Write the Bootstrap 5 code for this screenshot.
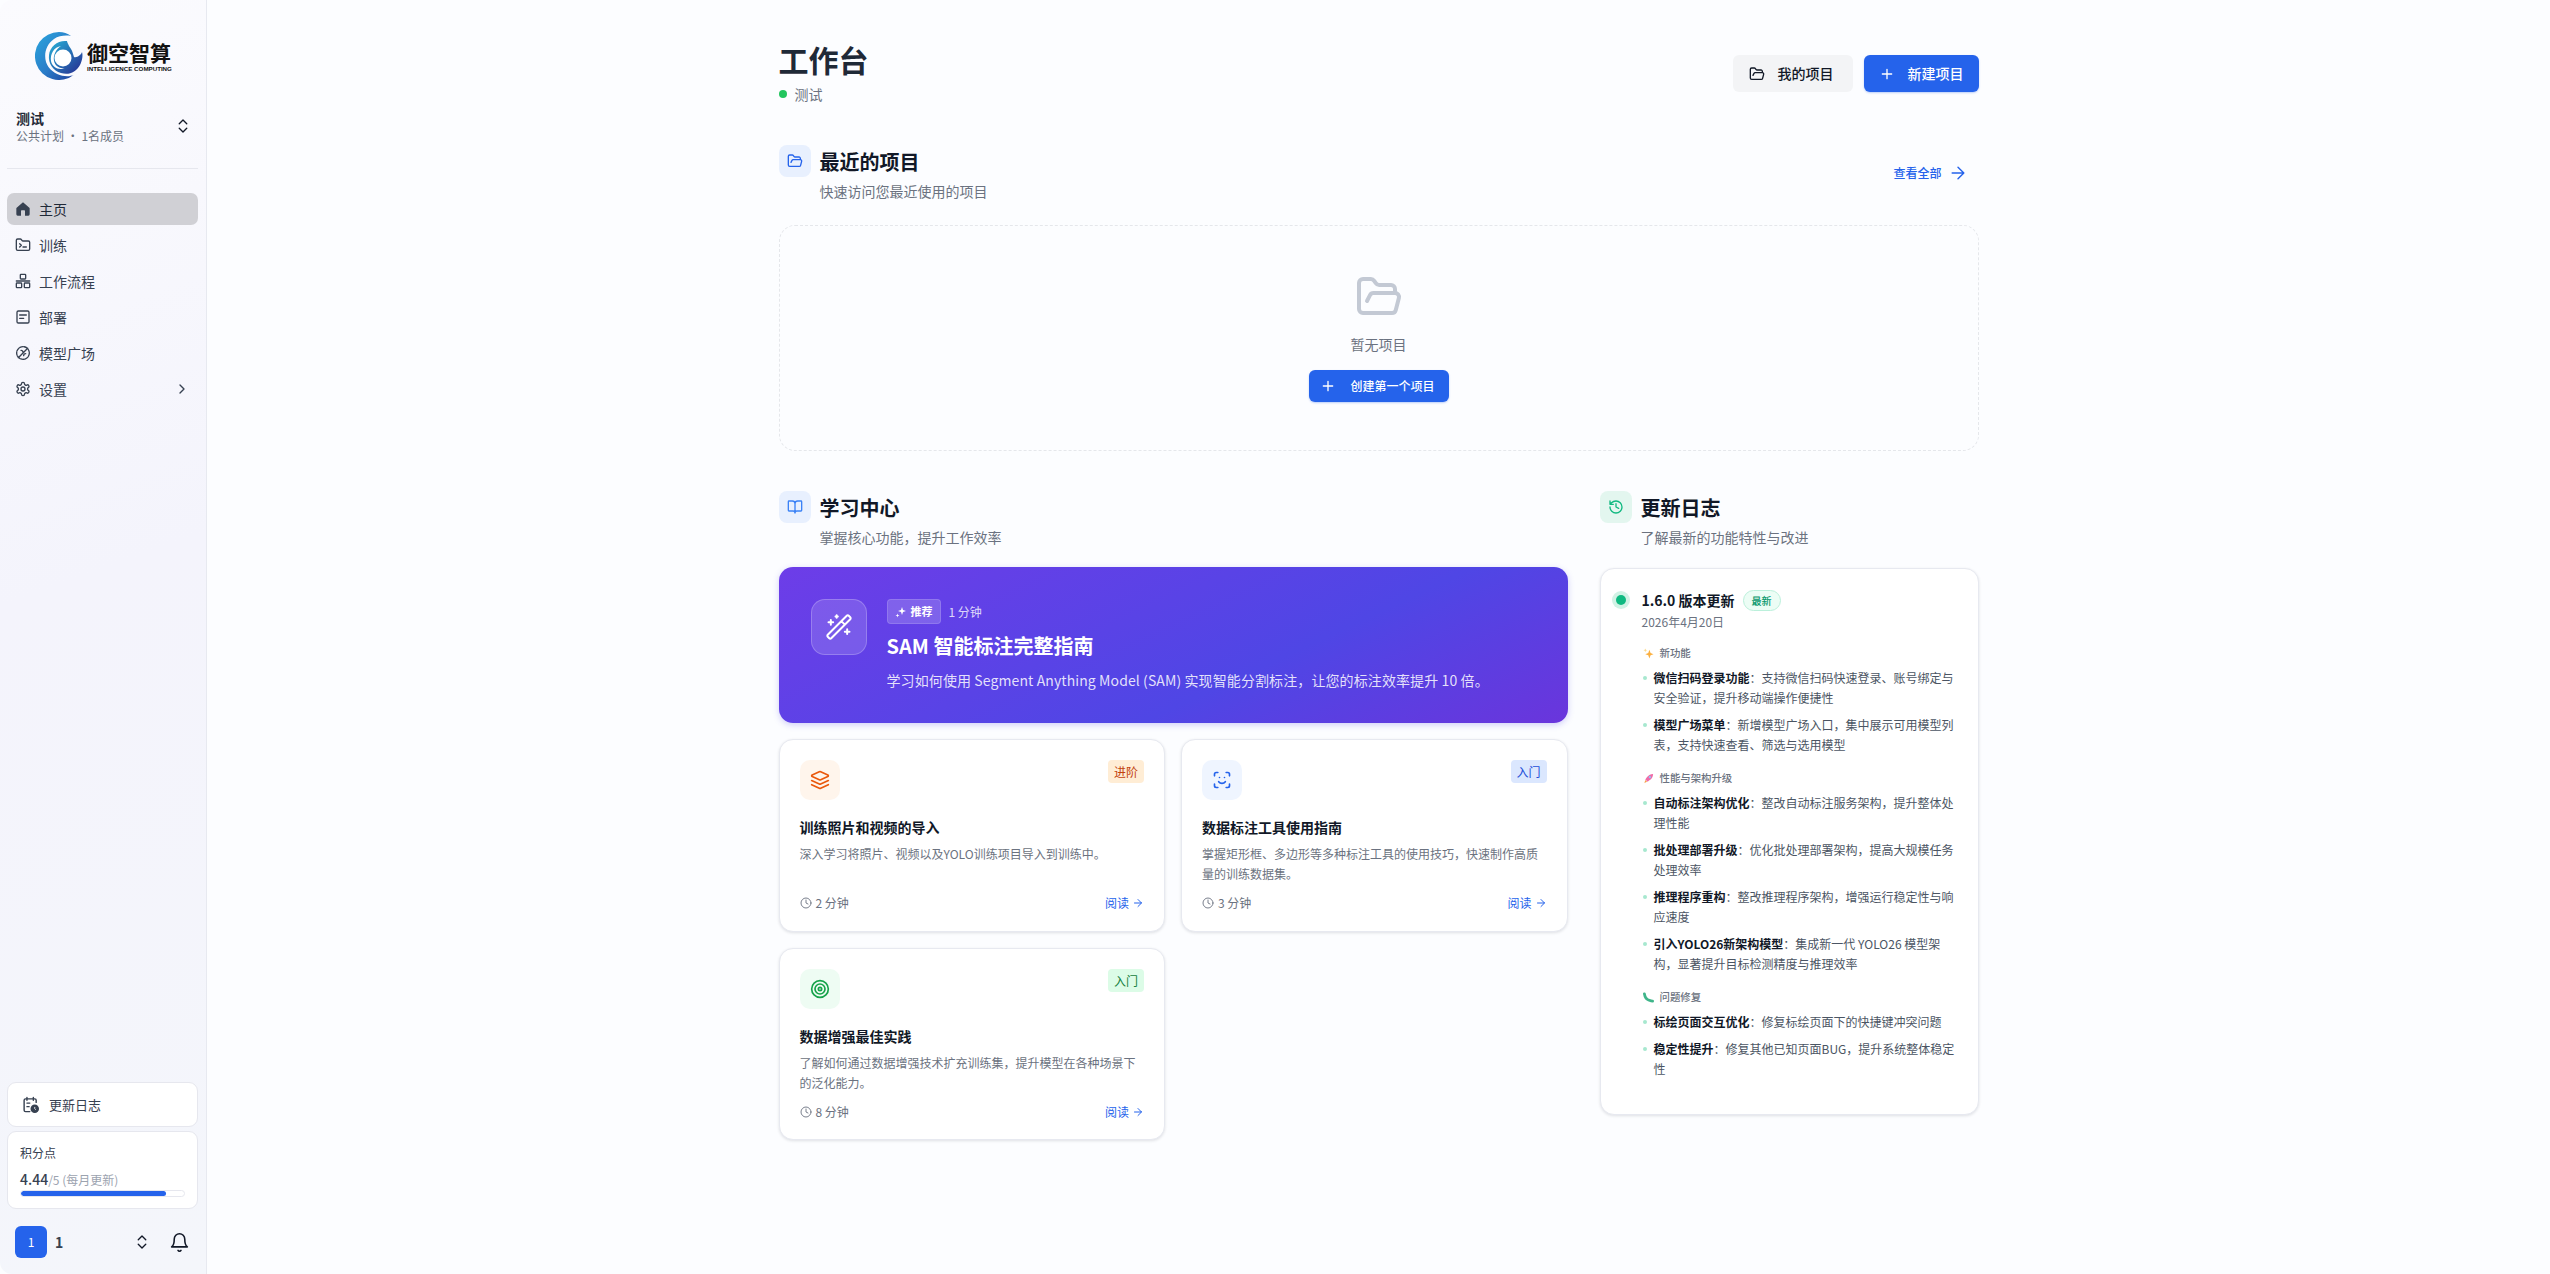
<!DOCTYPE html>
<html lang="zh-CN">
<head>
  <meta charset="UTF-8">
  <meta name="viewport" content="width=device-width, initial-scale=1.0">
  <title>工作台</title>
  <link href="https://cdn.jsdelivr.net/npm/bootstrap@5.3.3/dist/css/bootstrap.min.css" rel="stylesheet">
  <style>
    body { font-family: "Noto Sans CJK SC", "Noto Sans", sans-serif; background: #fcfdff; color: #111827; height: 1274px; overflow: hidden; }
    .ico { fill: none; stroke: currentColor; stroke-width: 2; stroke-linecap: round; stroke-linejoin: round; flex-shrink: 0; display: block; }

    /* sidebar */
    .side { width: 207px; height: 1274px; flex-shrink: 0; background: linear-gradient(160deg, #fbfbfe 0%, #f4f4fc 45%, #f4f6fb 100%); border-right: 1px solid #e7e9f0; border-radius: 12px 0 0 12px; padding: 0 8px 0 7px; }
    .logo-row { height: 48px; margin: 32px 0 0 28px; }
    .logo-name { font-size: 21px; font-weight: 700; line-height: 25px; color: #111; }
    .logo-sub { font-size: 6.200px; font-weight: 700; line-height: 8px; color: #111; white-space: nowrap; font-family: "Liberation Sans", sans-serif; }
    .ws-row { margin: 26px 0 0 9px; padding-right: 6px; height: 40px; }
    .ws-name { font-size: 14px; font-weight: 700; line-height: 20px; color: #1f2937; }
    .ws-sub { font-size: 12px; line-height: 16px; color: #6b7280; }
    .side-line { height: 1px; background: #e6e7ee; margin: 22px 0 24px; }
    .side-link { height: 32px; margin-bottom: 4px; padding: 0 8px; border-radius: 7px; font-size: 14px; color: #374151; gap: 8px; }
    .side-link.on { background: #d0d0d5; color: #1f2937; }
    .side-link svg { color: #374151; }
    .side-box { background: #fff; border: 1px solid #e6e7ee; border-radius: 9px; }
    .log-box { height: 45px; padding-left: 14px; gap: 10px; font-size: 13px; color: #374151; margin-bottom: 4px; }
    .pts-box { height: 78px; padding: 12px 12px 0; }
    .pts-title { font-size: 12px; line-height: 18px; color: #374151; }
    .pts-val { font-size: 14px; line-height: 20px; color: #374151; font-weight: 500; margin-top: 7px; }
    .pts-val span { font-size: 12px; color: #9ca3af; font-weight: 400; }
    .pts-bar { height: 7px; background: #fff; border: 1px solid #e6e7ee; border-radius: 4px; }
    .pts-bar .progress-bar { background: #2563eb; border-radius: 4px; }
    .user-row { height: 32px; margin: 17px 0 16px 8px; padding-right: 8px; }
    .user-av { width: 32px; height: 32px; background: #2563eb; color: #fff; border-radius: 6px; font-size: 12px; }
    .user-nm { font-size: 14px; font-weight: 700; color: #374151; margin-left: 8px; }
    .ud-user { margin-right: 18px; stroke-width: 1.800; }
    .ud-ws { stroke-width: 1.800; }

    /* main */
    .page { width: 1200px; padding-top: 41px; }
    .pg-title { font-size: 30px; font-weight: 700; line-height: 36px; color: #1f2937; margin: 0; }
    .pg-sub { font-size: 14px; line-height: 20px; color: #6b7280; margin-top: 7px; gap: 8px; }
    .live-dot { width: 8px; height: 8px; background: #22c55e; border-radius: 50%; }
    .top-btns { gap: 11px; margin-top: 14px; }
    .top-btn { height: 37px; font-size: 14px; font-weight: 500; border-radius: 6px; gap: 13px; border: 0; }
    .btn-soft { background: #f3f4f6; color: #111827; padding: 0 19px 0 16px; }
    .btn-soft:hover { background: #f3f4f6; color: #111827; }
    .btn-main { background: #2563eb; color: #fff; padding: 0 15px; box-shadow: 0 1px 2px rgba(37, 99, 235, .3); }
    .btn-main:hover { background: #2563eb; color: #fff; }

    .sec-head { margin-top: 41px; }
    .sec-ico { width: 32px; height: 32px; border-radius: 8px; }
    .ic-blue { background: #e8f0fe; color: #2563eb; }
    .ic-sky { background: #e8f0fe; color: #3b82f6; }
    .ic-green { background: #e3f6ef; color: #10b981; }
    .sec-title { font-size: 20px; font-weight: 700; line-height: 34px; color: #111827; margin: 0 0 0 9px; }
    .sec-sub { font-size: 14px; line-height: 20px; color: #6b7280; margin: 2px 0 0 41px; }
    .see-all { font-size: 12px; color: #2563eb; text-decoration: none; gap: 6px; padding-right: 11px; font-weight: 500; }
    .see-all svg { stroke-width: 1.700; }

    .empty-box { height: 226px; border: 1px dashed #e5e7eb; border-radius: 16px; margin-top: 24px; padding-top: 47px; }
    .empty-txt { font-size: 14px; line-height: 20px; color: #6b7280; margin: 13px 0 16px; }
    .first-btn { height: 32px; width: 140px; padding: 0 0 0 11px; font-size: 12px; font-weight: 500; border-radius: 6px; gap: 15px; border: 0; }

    .cols { margin-top: 40px; gap: 32px; }
    .col-l { width: 789px; }
    .col-r { width: 379px; }

    .hero { height: 156px; margin-top: 20px; border-radius: 14px; padding: 32px; color: #fff; background: linear-gradient(155deg, #6d3de8 0%, #4f46e5 62%, #6a35dc 100%); box-shadow: 0 2px 6px rgba(79, 70, 229, .25); gap: 20px; }
    .hero-ico { width: 56px; height: 56px; border-radius: 14px; background: rgba(255, 255, 255, .14); border: 1px solid rgba(255, 255, 255, .22); }
    .hero-tag { height: 25px; width: 54px; background: rgba(255, 255, 255, .18); border: 1px solid rgba(255, 255, 255, .14); border-radius: 4px; font-size: 11px; font-weight: 700; gap: 4px; }
    .hero-min { font-size: 12px; color: rgba(255, 255, 255, .8); margin-left: 8px; }
    .hero-title { font-size: 20px; font-weight: 700; line-height: 30px; margin: 7px 0 9px; }
    .hero-desc { font-size: 14px; line-height: 20px; color: rgba(255, 255, 255, .85); margin: 0; letter-spacing: .1px; }

    .guide { height: 192.500px; border: 1px solid #e7e9f0; border-radius: 14px; padding: 20px; box-shadow: 0 1px 3px rgba(17, 24, 39, .12); background: #fff; }
    .guide-ico { width: 40px; height: 40px; border-radius: 10px; }
    .ic-orange { background: #fff5ec; color: #ea580c; }
    .ic-lblue { background: #eff5ff; color: #2563eb; }
    .ic-lgreen { background: #eefcf3; color: #16a34a; }
    .lv { width: 36px; height: 23px; border-radius: 4px; font-size: 12px; font-weight: 400; padding: 0; line-height: 23px; }
    .lv-o { background: #ffedd5; color: #c2410c; }
    .lv-b { background: #dbe7fe; color: #1d4ed8; }
    .lv-g { background: #dcfce7; color: #15803d; }
    .guide-title { font-size: 14px; font-weight: 700; line-height: 22px; margin: 16px 0 6px; color: #111827; }
    .guide-desc { font-size: 12px; line-height: 20px; color: #6b7280; height: 40px; margin: 0 0 10px; }
    .guide-foot { font-size: 12px; line-height: 18px; color: #6b7280; }
    .guide-read { color: #2563eb; text-decoration: none; gap: 3px; }

    .log-card { margin-top: 21px; height: 547px; border: 1px solid #e7e9f0; border-radius: 14px; padding: 20px 19px 0 11px; box-shadow: 0 1px 3px rgba(17, 24, 39, .12); background: #fff; }
    .ver-dot { width: 18px; height: 18px; border-radius: 50%; background: #d1f2e5; margin-right: 12px; }
    .ver-dot i { width: 10px; height: 10px; border-radius: 50%; background: #10b981; display: block; }
    .ver-name { font-size: 14px; font-weight: 700; line-height: 22px; color: #111827; }
    .ver-tag { font-size: 10px; font-weight: 500; color: #059669; background: #ecfdf5; border: 1px solid #bbf0db; padding: 0; width: 38px; height: 21px; line-height: 19px; margin-left: 8px; }
    .ver-date { font-size: 12px; line-height: 18px; color: #6b7280; margin: 2px 0 0 30px; }
    .log-body { margin-left: 30px; }
    .grp { font-size: 10.400px; font-weight: 500; line-height: 16px; color: #6b7280; gap: 6px; margin: 14px 0 7px 1px; }
    .log-list + .grp { margin-top: 15px; }
    .log-list { list-style: none; padding: 0 0 0 12px; margin: 0; }
    .log-list li { font-size: 12px; line-height: 20px; color: #4b5563; margin-bottom: 7px; position: relative; }
    .log-list li::before { content: ""; position: absolute; left: -11px; top: 8px; width: 4px; height: 4px; border-radius: 50%; background: #a7e8cf; }
    .log-list b { font-weight: 700; color: #111827; }
  </style>
</head>
<body>

  <!-- icons -->
  <svg width="0" height="0" class="position-absolute">
    <symbol id="i-folder" viewBox="0 0 24 24"><path d="m6 14 1.5-2.9A2 2 0 0 1 9.24 10H20a2 2 0 0 1 1.94 2.5l-1.54 6a2 2 0 0 1-1.95 1.5H4a2 2 0 0 1-2-2V5a2 2 0 0 1 2-2h3.9a2 2 0 0 1 1.69.9l.81 1.2a2 2 0 0 0 1.67.9H18a2 2 0 0 1 2 2v2"/></symbol>
    <symbol id="i-plus" viewBox="0 0 24 24"><path d="M5 12h14M12 5v14"/></symbol>
    <symbol id="i-arrow" viewBox="0 0 24 24"><path d="M5 12h14M12 5l7 7-7 7"/></symbol>
    <symbol id="i-updown" viewBox="0 0 24 24"><path d="m7 15 5 5 5-5M7 9l5-5 5 5"/></symbol>
    <symbol id="i-right" viewBox="0 0 24 24"><path d="m9 18 6-6-6-6"/></symbol>
    <symbol id="i-clock" viewBox="0 0 24 24"><circle cx="12" cy="12" r="10"/><path d="M12 6v6l4 2"/></symbol>
    <symbol id="i-gear" viewBox="0 0 24 24"><path d="M12.22 2h-.44a2 2 0 0 0-2 2v.18a2 2 0 0 1-1 1.73l-.43.25a2 2 0 0 1-2 0l-.15-.08a2 2 0 0 0-2.73.73l-.22.38a2 2 0 0 0 .73 2.73l.15.1a2 2 0 0 1 1 1.72v.51a2 2 0 0 1-1 1.74l-.15.09a2 2 0 0 0-.73 2.73l.22.38a2 2 0 0 0 2.73.73l.15-.08a2 2 0 0 1 2 0l.43.25a2 2 0 0 1 1 1.73V20a2 2 0 0 0 2 2h.44a2 2 0 0 0 2-2v-.18a2 2 0 0 1 1-1.73l.43-.25a2 2 0 0 1 2 0l.15.08a2 2 0 0 0 2.73-.73l.22-.39a2 2 0 0 0-.73-2.73l-.15-.08a2 2 0 0 1-1-1.74v-.5a2 2 0 0 1 1-1.74l.15-.09a2 2 0 0 0 .73-2.73l-.22-.38a2 2 0 0 0-2.73-.73l-.15.08a2 2 0 0 1-2 0l-.43-.25a2 2 0 0 1-1-1.73V4a2 2 0 0 0-2-2z"/><circle cx="12" cy="12" r="3"/></symbol>
  </svg>

  <div class="d-flex">
    <aside class="side d-flex flex-column">
      <div class="logo-row d-flex align-items-center">
        <svg width="48" height="48" viewBox="0 0 48 48" class="flex-shrink-0">
          <defs>
            <linearGradient id="lg1" x1="0" y1="0" x2="1" y2="1"><stop offset="0" stop-color="#2aa7de"/><stop offset=".55" stop-color="#2a7cc8"/><stop offset="1" stop-color="#1e3f9c"/></linearGradient>
            <linearGradient id="lg2" x1="0" y1="0" x2="1" y2="1"><stop offset="0" stop-color="#27b2d8"/><stop offset="1" stop-color="#272a8f"/></linearGradient>
          </defs>
          <path d="M24 0a24 24 0 1 0 15 42.7C33 46 20 44 13.500 35 8 27 9 14 19 7c5-3.500 12-4 17-3C32.500 1.300 28.500 0 24 0z" fill="url(#lg1)"/>
          <path d="M32 9c-9-1-17 5-18 14-1 8 4 16 12 18 8 2.500 15-1 19-8 2.500-5 3-10 2-13-1 3-5 6-8 5-1-3-1.500-6-3-8-2-3-4-7-4-8z" fill="url(#lg2)"/>
          <circle cx="28" cy="26" r="8.500" fill="#fff"/>
          <path d="M19 29c1 5 6 8 11 7-6 3-13-1-14-7-1-7 3-14 10-15-5 3-8 9-7 15z" fill="#fff"/>
        </svg>
        <div class="ms-1">
          <div class="logo-name">御空智算</div>
          <div class="logo-sub">INTELLIGENCE COMPUTING</div>
        </div>
      </div>

      <div class="ws-row d-flex align-items-center justify-content-between">
        <div>
          <div class="ws-name">测试</div>
          <div class="ws-sub">公共计划 · 1名成员</div>
        </div>
        <svg class="ico ud-ws" width="18" height="18"><use href="#i-updown"/></svg>
      </div>
      <div class="side-line"></div>

      <nav class="nav flex-column">
        <a class="nav-link side-link on d-flex align-items-center" href="#">
          <svg width="16" height="16" viewBox="0 0 24 24" fill="currentColor"><path d="M12 2 2.500 10a1.500 1.500 0 0 0-.5 1.200V20a2 2 0 0 0 2 2h5v-7a1 1 0 0 1 1-1h4a1 1 0 0 1 1 1v7h5a2 2 0 0 0 2-2v-8.800a1.500 1.500 0 0 0-.5-1.200z"/></svg>
          主页
        </a>
        <a class="nav-link side-link d-flex align-items-center" href="#">
          <svg class="ico" width="16" height="16" viewBox="0 0 24 24"><path d="M20 20a2 2 0 0 0 2-2V8a2 2 0 0 0-2-2h-7.900a2 2 0 0 1-1.690-.9L9.600 3.900A2 2 0 0 0 7.930 3H4a2 2 0 0 0-2 2v13a2 2 0 0 0 2 2Z"/><path d="m7 10 2.500 2.500L7 15M12 15h5"/></svg>
          训练
        </a>
        <a class="nav-link side-link d-flex align-items-center" href="#">
          <svg class="ico" width="16" height="16" viewBox="0 0 24 24"><rect x="8" y="2" width="8" height="7" rx="1"/><rect x="2" y="15" width="8" height="7" rx="1"/><rect x="14" y="15" width="8" height="7" rx="1"/><path d="M2 12h20"/></svg>
          工作流程
        </a>
        <a class="nav-link side-link d-flex align-items-center" href="#">
          <svg class="ico" width="16" height="16" viewBox="0 0 24 24"><rect x="3" y="3" width="18" height="18" rx="2"/><path d="M7 9h10M7 14h6"/></svg>
          部署
        </a>
        <a class="nav-link side-link d-flex align-items-center" href="#">
          <svg class="ico" width="16" height="16" viewBox="0 0 24 24"><circle cx="12" cy="12" r="9.500" stroke-dasharray="5 1.500"/><path d="M5 19 19 5M9 8a3 3 0 0 1 3 3M13 16a3 3 0 0 1 3-3"/></svg>
          模型广场
        </a>
        <a class="nav-link side-link d-flex align-items-center" href="#">
          <svg class="ico" width="16" height="16"><use href="#i-gear"/></svg>
          设置
          <svg class="ico ms-auto" width="16" height="16"><use href="#i-right"/></svg>
        </a>
      </nav>

      <div class="mt-auto">
        <div class="side-box log-box d-flex align-items-center">
          <svg width="17" height="17" viewBox="0 0 24 24" class="ico"><path d="M20 9V6a2 2 0 0 0-2-2H5a2 2 0 0 0-2 2v14a2 2 0 0 0 2 2h6M16 2v4M7 2v4M7 10h4M7 15h3"/><circle cx="18" cy="18" r="5" fill="currentColor"/><path d="M18 16v2l1 1" stroke="#fff" stroke-width="1.200"/></svg>
          更新日志
        </div>
        <div class="side-box pts-box">
          <div class="pts-title">积分点</div>
          <div class="pts-val">4.44<span>/5 (每月更新)</span></div>
          <div class="progress pts-bar"><div class="progress-bar" style="width: 88.800%"></div></div>
        </div>
        <div class="user-row d-flex align-items-center">
          <div class="user-av d-flex align-items-center justify-content-center">1</div>
          <span class="user-nm">1</span>
          <svg class="ico ud-user ms-auto" width="18" height="18"><use href="#i-updown"/></svg>
          <svg class="ico ud-ws" width="21" height="21" viewBox="0 0 24 24"><path d="M6 8a6 6 0 0 1 12 0c0 7 3 9 3 9H3s3-2 3-9M10.300 21a1.940 1.940 0 0 0 3.400 0"/></svg>
        </div>
      </div>
    </aside>

    <main class="flex-grow-1 d-flex justify-content-center">
      <div class="page">
        <div class="d-flex justify-content-between align-items-start">
          <div>
            <h1 class="pg-title">工作台</h1>
            <div class="pg-sub d-flex align-items-center"><span class="live-dot"></span>测试</div>
          </div>
          <div class="top-btns d-flex">
            <button type="button" class="btn btn-soft top-btn d-flex align-items-center">
              <svg class="ico" width="16" height="16"><use href="#i-folder"/></svg>我的项目
            </button>
            <button type="button" class="btn btn-main top-btn d-flex align-items-center">
              <svg class="ico" width="16" height="16"><use href="#i-plus"/></svg>新建项目
            </button>
          </div>
        </div>

        <div class="sec-head d-flex justify-content-between align-items-center">
          <div>
            <div class="d-flex align-items-start">
              <div class="sec-ico ic-blue d-flex align-items-center justify-content-center"><svg class="ico" width="16" height="16"><use href="#i-folder"/></svg></div>
              <h2 class="sec-title">最近的项目</h2>
            </div>
            <div class="sec-sub">快速访问您最近使用的项目</div>
          </div>
          <a class="see-all d-flex align-items-center" href="#">查看全部<svg class="ico" width="20" height="20"><use href="#i-arrow"/></svg></a>
        </div>

        <div class="empty-box d-flex flex-column align-items-center">
          <svg class="ico" width="48" height="48" style="color:#c3c9d4"><use href="#i-folder"/></svg>
          <div class="empty-txt">暂无项目</div>
          <button type="button" class="btn btn-main first-btn d-flex align-items-center">
            <svg class="ico" width="16" height="16"><use href="#i-plus"/></svg>创建第一个项目
          </button>
        </div>

        <div class="cols d-flex align-items-start">
          <section class="col-l">
            <div class="d-flex align-items-start">
              <div class="sec-ico ic-sky d-flex align-items-center justify-content-center">
                <svg class="ico" width="16" height="16" viewBox="0 0 24 24"><path d="M12 7v14M3 18a1 1 0 0 1-1-1V4a1 1 0 0 1 1-1h5a4 4 0 0 1 4 4 4 4 0 0 1 4-4h5a1 1 0 0 1 1 1v13a1 1 0 0 1-1 1h-6a3 3 0 0 0-3 3 3 3 0 0 0-3-3z"/></svg>
              </div>
              <h2 class="sec-title">学习中心</h2>
            </div>
            <div class="sec-sub">掌握核心功能，提升工作效率</div>

            <div class="hero d-flex">
              <div class="hero-ico d-flex align-items-center justify-content-center flex-shrink-0">
                <svg class="ico" width="28" height="28" viewBox="0 0 24 24" style="stroke-width:1.700"><path d="m21.640 3.640-1.280-1.280a1.210 1.210 0 0 0-1.720 0L2.360 18.640a1.210 1.210 0 0 0 0 1.720l1.280 1.280a1.200 1.200 0 0 0 1.720 0L21.640 5.360a1.200 1.200 0 0 0 0-1.720M14 7l3 3M5 6v4M19 14v4M10 2v2M7 8H3M21 16h-4M11 3H9"/></svg>
              </div>
              <div>
                <div class="d-flex align-items-center">
                  <span class="hero-tag d-flex align-items-center justify-content-center">
                    <svg width="12" height="12" viewBox="0 0 24 24" fill="currentColor"><path d="M14 2l2 6 6 2-6 2-2 6-2-6-6-2 6-2zM5 15l1 3 3 1-3 1-1 3-1-3-3-1 3-1z"/></svg>推荐
                  </span>
                  <span class="hero-min">1 分钟</span>
                </div>
                <h3 class="hero-title">SAM 智能标注完整指南</h3>
                <p class="hero-desc">学习如何使用 Segment Anything Model (SAM) 实现智能分割标注，让您的标注效率提升 10 倍。</p>
              </div>
            </div>

            <div class="row g-3 mt-0">
              <div class="col-6">
                <div class="guide">
                  <div class="d-flex justify-content-between align-items-start">
                    <div class="guide-ico ic-orange d-flex align-items-center justify-content-center">
                      <svg class="ico" width="20" height="20" viewBox="0 0 24 24"><path d="M12.830 2.180a2 2 0 0 0-1.660 0L2.600 6.080a1 1 0 0 0 0 1.830l8.580 3.910a2 2 0 0 0 1.660 0l8.580-3.900a1 1 0 0 0 0-1.830ZM22 17.650l-9.170 4.160a2 2 0 0 1-1.660 0L2 17.650M22 12.650l-9.170 4.160a2 2 0 0 1-1.660 0L2 12.650"/></svg>
                    </div>
                    <span class="badge lv lv-o">进阶</span>
                  </div>
                  <h4 class="guide-title">训练照片和视频的导入</h4>
                  <p class="guide-desc">深入学习将照片、视频以及YOLO训练项目导入到训练中。</p>
                  <div class="guide-foot d-flex justify-content-between align-items-center">
                    <span class="d-flex align-items-center gap-1"><svg class="ico" width="12" height="12" style="stroke-width:1.800"><use href="#i-clock"/></svg>2 分钟</span>
                    <a class="guide-read d-flex align-items-center" href="#">阅读<svg class="ico" width="12" height="12"><use href="#i-arrow"/></svg></a>
                  </div>
                </div>
              </div>
              <div class="col-6">
                <div class="guide">
                  <div class="d-flex justify-content-between align-items-start">
                    <div class="guide-ico ic-lblue d-flex align-items-center justify-content-center">
                      <svg class="ico" width="20" height="20" viewBox="0 0 24 24"><path d="M3 7V5a2 2 0 0 1 2-2h2M17 3h2a2 2 0 0 1 2 2v2M21 17v2a2 2 0 0 1-2 2h-2M7 21H5a2 2 0 0 1-2-2v-2M8 14s1.500 2 4 2 4-2 4-2M9 9h.01M15 9h.01"/></svg>
                    </div>
                    <span class="badge lv lv-b">入门</span>
                  </div>
                  <h4 class="guide-title">数据标注工具使用指南</h4>
                  <p class="guide-desc">掌握矩形框、多边形等多种标注工具的使用技巧，快速制作高质量的训练数据集。</p>
                  <div class="guide-foot d-flex justify-content-between align-items-center">
                    <span class="d-flex align-items-center gap-1"><svg class="ico" width="12" height="12" style="stroke-width:1.800"><use href="#i-clock"/></svg>3 分钟</span>
                    <a class="guide-read d-flex align-items-center" href="#">阅读<svg class="ico" width="12" height="12"><use href="#i-arrow"/></svg></a>
                  </div>
                </div>
              </div>
              <div class="col-6">
                <div class="guide">
                  <div class="d-flex justify-content-between align-items-start">
                    <div class="guide-ico ic-lgreen d-flex align-items-center justify-content-center">
                      <svg class="ico" width="20" height="20" viewBox="0 0 24 24"><circle cx="12" cy="12" r="10"/><circle cx="12" cy="12" r="6"/><circle cx="12" cy="12" r="2"/></svg>
                    </div>
                    <span class="badge lv lv-g">入门</span>
                  </div>
                  <h4 class="guide-title">数据增强最佳实践</h4>
                  <p class="guide-desc">了解如何通过数据增强技术扩充训练集，提升模型在各种场景下的泛化能力。</p>
                  <div class="guide-foot d-flex justify-content-between align-items-center">
                    <span class="d-flex align-items-center gap-1"><svg class="ico" width="12" height="12" style="stroke-width:1.800"><use href="#i-clock"/></svg>8 分钟</span>
                    <a class="guide-read d-flex align-items-center" href="#">阅读<svg class="ico" width="12" height="12"><use href="#i-arrow"/></svg></a>
                  </div>
                </div>
              </div>
            </div>
          </section>

          <section class="col-r">
            <div class="d-flex align-items-start">
              <div class="sec-ico ic-green d-flex align-items-center justify-content-center">
                <svg class="ico" width="16" height="16" viewBox="0 0 24 24"><path d="M3 12a9 9 0 1 0 9-9 9.750 9.750 0 0 0-6.740 2.740L3 8M3 3v5h5M12 7v5l4 2"/></svg>
              </div>
              <h2 class="sec-title">更新日志</h2>
            </div>
            <div class="sec-sub">了解最新的功能特性与改进</div>

            <div class="log-card">
              <div class="d-flex align-items-center">
                <div class="ver-dot d-flex align-items-center justify-content-center"><i></i></div>
                <span class="ver-name">1.6.0 版本更新</span>
                <span class="badge rounded-pill ver-tag">最新</span>
              </div>
              <div class="ver-date">2026年4月20日</div>
              <div class="log-body">
                <div class="grp d-flex align-items-center">
                  <svg width="11" height="11" viewBox="0 0 24 24"><path d="M14 4l2.500 7 6.500 2.500-6.500 2.500L14 23l-2.500-7L5 13.500 11.500 11z" fill="#fbb040"/><path d="M5 1l1.200 3L9 5 6.200 6 5 9 3.800 6 1 5l2.800-1z" fill="#fdd888"/></svg>新功能
                </div>
                <ul class="log-list">
                  <li><b>微信扫码登录功能</b>：支持微信扫码快速登录、账号绑定与安全验证，提升移动端操作便捷性</li>
                  <li><b>模型广场菜单</b>：新增模型广场入口，集中展示可用模型列表，支持快速查看、筛选与选用模型</li>
                </ul>
                <div class="grp d-flex align-items-center">
                  <svg width="11" height="11" viewBox="0 0 24 24"><path d="M22 2c-6 0-11 3-14 8l-3 4 5 5 4-3c5-3 8-8 8-14z" fill="#f06ba8"/><circle cx="15" cy="9" r="2.500" fill="#88c9f9"/><path d="M5 15l4 4-6 3z" fill="#f7a04b"/></svg>性能与架构升级
                </div>
                <ul class="log-list">
                  <li><b>自动标注架构优化</b>：整改自动标注服务架构，提升整体处理性能</li>
                  <li><b>批处理部署升级</b>：优化批处理部署架构，提高大规模任务处理效率</li>
                  <li><b>推理程序重构</b>：整改推理程序架构，增强运行稳定性与响应速度</li>
                  <li><b>引入YOLO26新架构模型</b>：集成新一代 YOLO26 模型架构，显著提升目标检测精度与推理效率</li>
                </ul>
                <div class="grp d-flex align-items-center">
                  <svg width="11" height="11" viewBox="0 0 24 24"><path d="M3 4c1 6 3 11 8 13 3 1 6 3 10 3" fill="none" stroke="#3fb58a" stroke-width="6" stroke-linecap="round"/></svg>问题修复
                </div>
                <ul class="log-list">
                  <li><b>标绘页面交互优化</b>：修复标绘页面下的快捷键冲突问题</li>
                  <li><b>稳定性提升</b>：修复其他已知页面BUG，提升系统整体稳定性</li>
                </ul>
              </div>
            </div>
          </section>
        </div>
      </div>
    </main>
  </div>

  <script src="https://cdn.jsdelivr.net/npm/bootstrap@5.3.3/dist/js/bootstrap.bundle.min.js"></script>
</body>
</html>
